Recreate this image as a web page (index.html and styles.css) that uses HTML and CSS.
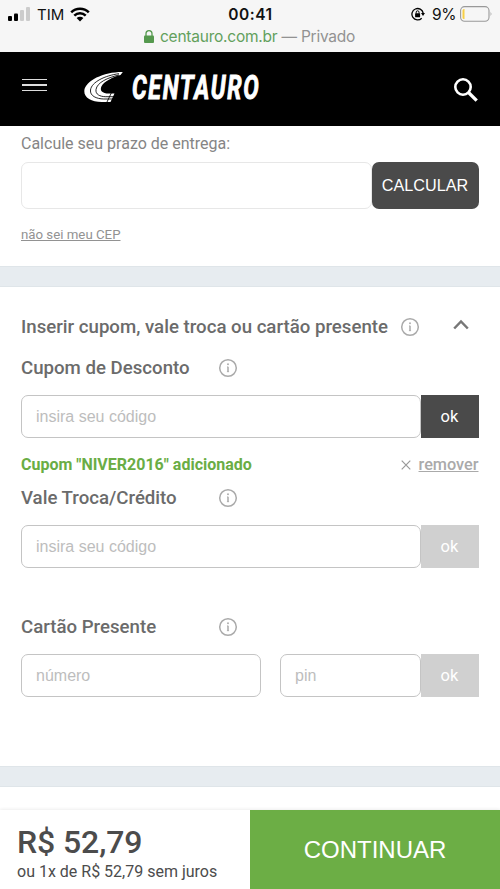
FILE: index.html
```
<!DOCTYPE html>
<html lang="pt-BR">
<head>
<meta charset="utf-8">
<meta name="viewport" content="width=device-width">
<title>Centauro</title>
<link rel="stylesheet" href="styles.css">
</head>
<body>
<svg class="defs" width="0" height="0">
  <symbol id="info" viewBox="0 0 20 20"><circle cx="10" cy="10" r="8.3" fill="none" stroke="currentColor" stroke-width="1.500"/><path d="M10 8.700v5.300" fill="none" stroke="currentColor" stroke-width="1.500"/><path d="M9 8.900h1M8.900 13.700h2.200" stroke="currentColor" stroke-width=".7"/><circle cx="10" cy="6.300" r=".95" fill="currentColor"/></symbol>
</svg>
<div class="browser">
  <div class="status">
    <div class="carrier">
      <svg width="23" height="15" viewBox="0 0 23 15"><rect x="0" y="9" width="4" height="5" rx="1"/><rect x="6" y="6.500" width="4" height="7.500" rx="1"/><rect x="12" y="3" width="4" height="11" rx="1" fill="#ccc"/><rect x="18" y="0" width="4" height="14" rx="1" fill="#ccc"/></svg>
      <span class="tim">TIM</span>
      <svg width="20" height="15" viewBox="0 0 20 15"><path d="M1.200 5.300a12.500 12.500 0 0 1 17.600 0M4.300 8.600a8 8 0 0 1 11.400 0" fill="none" stroke="#000" stroke-width="2.500"/><path d="M6.600 11.100a4.900 4.900 0 0 1 6.800 0L10 14.500z"/></svg>
    </div>
    <span class="clock">00:41</span>
    <div class="power">
      <svg width="14" height="14" viewBox="0 0 14 14"><path d="M10.700 11.200A5.700 5.700 0 1 1 12.200 6" fill="none" stroke="#000" stroke-width="1.300"/><path d="M10 6h4l-2 3z"/><rect x="4.100" y="6.200" width="5" height="4" rx=".5"/><path d="M5.200 6.500V5.200a1.400 1.400 0 0 1 2.800 0v1.300" fill="none" stroke="#000"/></svg>
      <span class="pct">9%</span>
      <svg width="33" height="16" viewBox="0 0 33 16"><rect x=".6" y=".6" width="28.400" height="14.600" rx="4" fill="none" stroke="#999" stroke-width="1.100"/><path d="M4.500 3H4a1.500 1.500 0 0 0-1.500 1.500v7A1.500 1.500 0 0 0 4 13h.5z" fill="#f8cf45"/><path d="M30.600 5.500q1.700 2.400 0 4.800z" fill="#999"/></svg>
    </div>
  </div>
  <div class="address">
    <svg width="10" height="13" viewBox="0 0 10 13"><rect x="0" y="5.500" width="10" height="7.500" rx="1" fill="#55994e"/><path d="M2 6V3.700a3 3 0 0 1 6 0V6" fill="none" stroke="#55994e" stroke-width="1.300"/></svg>
    <span class="domain">centauro.com.br</span><span class="private">— Privado</span>
  </div>
</div>
<header class="header">
  <div class="menu"><i></i><i></i><i></i></div>
  <svg class="logo" width="190" height="40" viewBox="0 0 190 40">
    <path d="M38.800 6C20 5.800 1 14.500.3 25 0 32 8 36.200 18.500 36h8L30.500 27.500H25c-7 0-9.500-3-7.500-7.300C20.500 15 29 11 36.500 9z" fill="#fff"/>
    <path d="M35 7.700C21 9.500 7.500 16 6.500 24c-.7 6 6 8.800 13.200 9h10M35 9C24 11.500 13 16.500 12 23.500c-.7 5 4 7 9.200 7.200h9M27.300 27l-4.800 10" fill="none" stroke="#000" stroke-width=".85"/>
    <text class="wordmark" transform="translate(48 33) scale(.7 1)" textLength="181" lengthAdjust="spacing">CENTAURO</text>
  </svg>
  <svg class="search" width="26" height="26" viewBox="0 0 26 26"><circle cx="10" cy="10" r="7.700" fill="none" stroke="#fff" stroke-width="2.600"/><path d="M15.500 15.500l8.200 8.200" stroke="#fff" stroke-width="3.300"/></svg>
</header>
<main>
  <section class="delivery">
    <p class="lead">Calcule seu prazo de entrega:</p>
    <div class="row tall"><div class="field pale"></div><button class="calc">CALCULAR</button></div>
    <a class="cep">não sei meu CEP</a>
  </section>
  <div class="band"></div>
  <section class="coupons">
    <div class="heading"><h2 class="title">Inserir cupom, vale troca ou cartão presente</h2><svg class="info"><use href="#info"/></svg><svg class="chevron" width="16" height="11" viewBox="0 0 16 11"><path d="M1.200 9.500L8 2.500l6.800 7" fill="none" stroke="#777" stroke-width="2.500"/></svg></div>
    <div class="label"><h3>Cupom de Desconto</h3><svg class="info"><use href="#info"/></svg></div>
    <div class="row"><div class="field">insira seu código</div><button class="ok dark">ok</button></div>
    <div class="applied"><strong class="added">Cupom "NIVER2016" adicionado</strong><span class="remove"><svg width="10" height="10" viewBox="0 0 10 10"><path d="M.7.7l8.600 8.600M9.300.7L.7 9.300" stroke="#999" stroke-width="1.200"/></svg><a>remover</a></span></div>
    <div class="label second"><h3>Vale Troca/Crédito</h3><svg class="info"><use href="#info"/></svg></div>
    <div class="row"><div class="field">insira seu código</div><button class="ok">ok</button></div>
    <div class="label third"><h3>Cartão Presente</h3><svg class="info"><use href="#info"/></svg></div>
    <div class="row"><div class="field number">número</div><div class="field">pin</div><button class="ok">ok</button></div>
  </section>
  <div class="band"></div>
</main>
<footer class="footer">
  <div class="total"><strong class="price">R$ 52,79</strong><span class="terms">ou 1x de R$ 52,79 sem juros</span></div>
  <button class="continue">CONTINUAR</button>
</footer>
</body>
</html>
```
FILE: styles.css
```
* { box-sizing: border-box; }
body { margin: 0; height: 889px; display: flex; flex-direction: column; overflow: hidden; background: #fff; color: #6b6b6b; font-family: Roboto, sans-serif; }
h2, h3, p { margin: 0; font-weight: 500; }
button { border: 0; padding: 0; color: #fff; font-family: "Liberation Sans", sans-serif; }
svg { display: block; flex: none; }
.defs { position: absolute; }
.browser { height: 52px; background: #f6f6f6; font-family: Inter, sans-serif; color: #111; }
.status { height: 27px; display: grid; grid-template-columns: 1fr auto 1fr; align-items: center; padding: 1px 7px 0 8px; }
.carrier, .power { display: flex; align-items: center; }
.carrier { gap: 6px; }
.tim { font-size: 15px; width: 27px; }
.clock { font-size: 15.5px; font-weight: 600; letter-spacing: .5px; }
.power { justify-content: flex-end; }
.power > svg:first-child { margin-right: 7px; }
.pct { font-size: 15.5px; letter-spacing: -.4px; margin-right: 4px; }
.address { height: 18px; display: flex; align-items: center; padding-left: 144px; font-size: 15.5px; letter-spacing: -.23px; }
.domain { margin: 0 4px 0 6px; color: #62a05c; }
.private { color: #929292; }
.header { height: 74px; background: #000; display: flex; align-items: center; padding: 0 22px; }
.menu { width: 25px; display: grid; gap: 4px; margin-top: -8px; }
.menu i { height: 1.500px; background: #ddd; }
.logo { margin: -6px 0 0 37px; overflow: visible; }
.wordmark { font: italic 700 33px Roboto, sans-serif; fill: #fff; stroke: #fff; stroke-width: 1; }
.search { margin: 2px -1px 0 auto; }
section { padding: 0 21.500px 0 21px; }
.delivery { height: 140px; padding-top: 8px; }
.lead { font-size: 16px; line-height: 20px; font-weight: 400; color: #858585; }
.row { display: flex; height: 43px; }
.tall { height: 47px; margin-top: 8px; }
.field { flex: 1; border: 1.500px solid #c4c4c4; border-radius: 7px; padding-left: 14px; display: flex; align-items: center; font: 16px "Liberation Sans", sans-serif; color: #bdbdbd; }
.pale { border-color: #e7e7e7; }
.calc { width: 107px; border-radius: 7px; background: #4a4a4a; font-size: 16.200px; }
.cep { display: block; width: max-content; margin-top: 18px; font-size: 13.250px; line-height: 16px; color: #929292; text-decoration: underline; }
.band { height: 21px; background: #e7ecf0; border: 1px solid #dfe5e9; border-width: 1px 0; }
.coupons { height: 479px; padding-top: 28px; }
.heading, .label { display: flex; align-items: center; }
.heading { height: 24px; }
.title { width: 379px; font-size: 18.650px; white-space: nowrap; }
.info { width: 20px; height: 20px; color: #aaa; }
.chevron { margin-left: 33px; margin-top: -5px; }
.label { height: 24px; margin: 17px 0 15px; }
h3 { width: 197px; font-size: 18.650px; }
.ok { width: 58px; background: #d0d0d0; font: 16.500px Roboto, sans-serif; }
.dark { background: #4a4a4a; }
.applied { height: 19px; margin-top: 17px; display: flex; align-items: center; justify-content: space-between; }
.added { color: #6aad45; font-size: 16px; font-weight: 700; }
.remove { display: flex; align-items: center; gap: 8px; color: #aaa; font-size: 16.250px; font-weight: 500; text-decoration: underline; }
.label h3 { margin-top: -1px; }
.second { margin-top: 12px; }
.third { margin-top: 47px; }
.number { flex: 0 0 240px; margin-right: 19px; }
.footer { margin-top: auto; height: 79px; display: grid; grid-template-columns: 1fr 1fr; box-shadow: 0 -1px 3px #eee; }
.total { padding: 14px 0 0 17px; color: #4c4c4c; display: flex; flex-direction: column; }
.price { font-size: 32px; line-height: 36px; font-weight: 500; letter-spacing: -.1px; }
.terms { font-size: 16px; line-height: 23px; }
.continue { background: #6cae45; font-size: 24px; }
```
